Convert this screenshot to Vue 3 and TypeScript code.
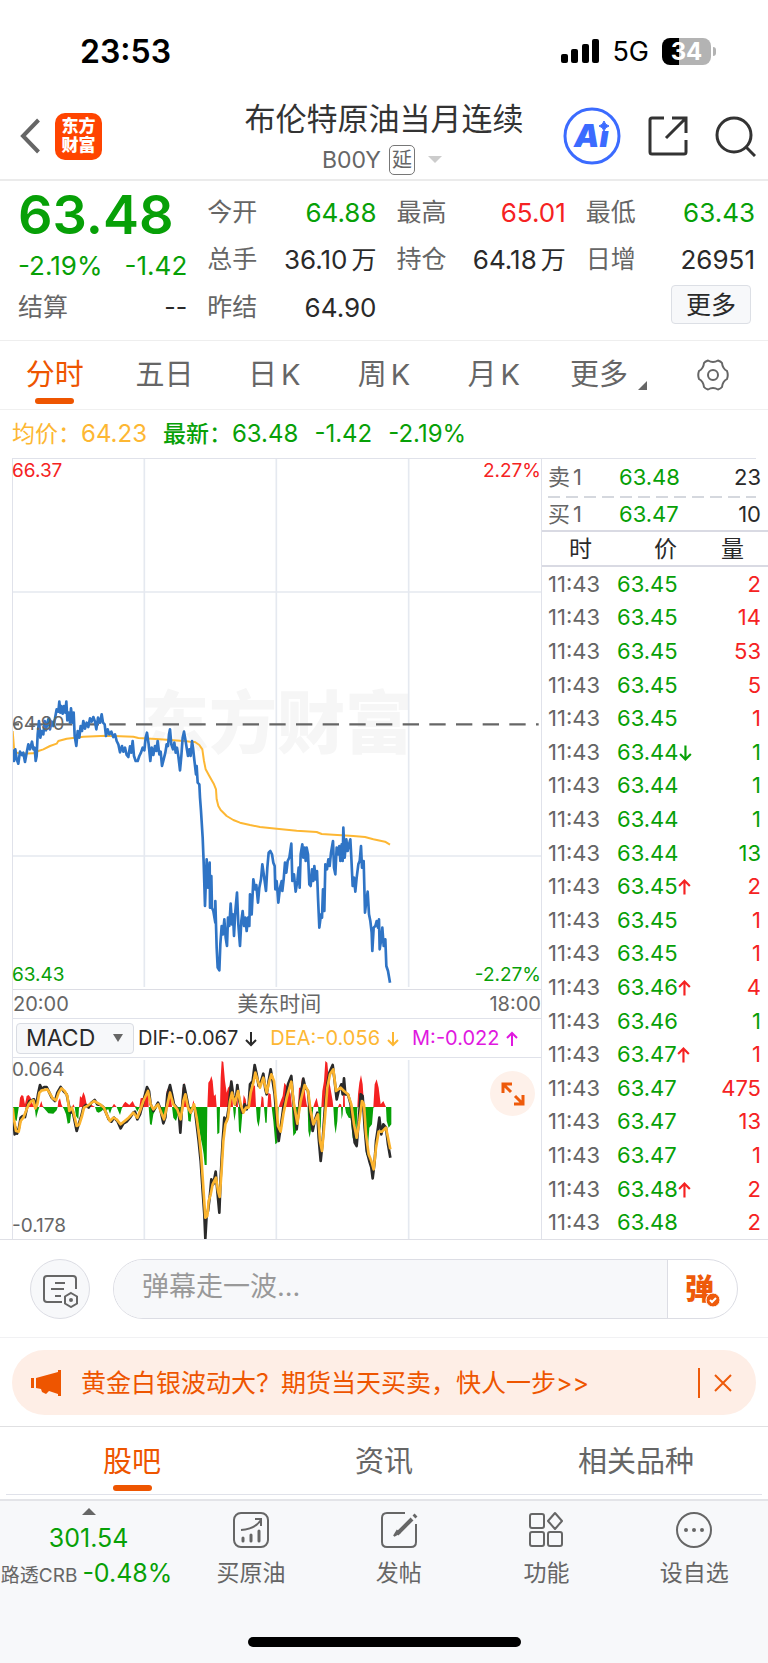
<script setup lang="ts">
type Point = [number, number]
type Trend = 'up' | 'down' | 'flat'

interface Trade {
  price: string
  arrow?: 'up' | 'down'
  volume: number
  side: Trend
}

const parse = (source: string, dx: number, dy: number): Point[] =>
  source.trim().split(/\s+/).map((pair) => {
    const [x, y] = pair.split(',').map(Number)
    return [x + dx, y + dy]
  })

const toPoints = (points: Point[]): string => points.map((p) => p.join(',')).join(' ')

const priceLine = toPoints([
  ...parse(`38,205 42,240 46,205 50,235 55,248 60,212 66,222 70,215 75,243 80,215 85,190 90,205 96,182 100,205 104,200 107,240
    110,225 113,160 117,120 121,170 125,150 130,160 134,120 138,148 142,125 146,112 150,145 155,122 160,135 165,112 170,85
    175,92 178,62 181,95 184,75 188,98 192,75 196,95 199,62 202,118 206,95 210,125 213,82 218,125 221,95 224,165 229,195 233,150
    238,170 242,135 246,150 250,120 255,143 260,125 265,138 270,112 275,122 280,108 285,122 289,145 294,110 300,125 305,100
    309,125 314,130 318,165 323,145 328,160 334,152 340,168 345,160 350,180 355,190 360,214 366,195 370,212 375,200 380,222
    385,228 390,196 394,215 398,180 402,225 407,240 413,240 418,225 423,215 428,200 433,208 437,170 441,155 446,190 451,240
    455,200 460,222 465,195 469,210 473,180 478,220 482,212 486,255 491,235 496,215 500,190 504,195 507,160 510,145 514,190
    519,205 523,185 527,215 531,200 535,225 540,268 544,225 548,170 552,152 556,175 560,200 564,225 568,205 572,225 576,180`, -36, 669),
  ...parse(`9,200 12,228 18,280 20,255 23,305 28,310 30,350 33,390 38,470 41,545 45,675 50,535 54,620 59,545 60,680 64,585 66,680 70,690
    76,725 76,660 80,800 83,860 88,868 91,790 95,735 99,760 103,715 107,770 111,795 114,710 118,735 122,668 126,730 129,700
    132,765 136,690 141,635 145,730 150,795 154,720 158,690 162,735 166,710 170,750 174,710 178,735 180,640 185,700 190,595
    195,625 199,612 204,665 208,620 213,595 217,550 222,585 228,630 232,560 236,515 241,510 246,520 250,545 254,555 256,625
    260,600 265,665 270,620 275,600 277,630 281,595 285,545 289,575 293,540 298,530 304,488 307,600 312,580 317,632 322,600
    326,560 329,620 332,520 337,490 340,530 344,500 347,540 350,500 354,520 358,610 362,615 366,565 370,600 373,555 377,595
    381,570 384,650 388,740 393,700 396,710 399,625 403,690 406,550 411,565 415,535 419,555 423,515 429,480 432,560 436,580
    440,500 444,520 448,495 451,540 455,490 458,540 460,440 464,530 469,475 473,510 477,490 481,475 484,530 488,615 492,590
    496,632 500,590 505,550 509,540 513,495 516,560 521,540 525,695 529,660 533,632 537,700 541,720 545,755 547,810 551,740
    556,735 560,720 564,740 567,715 569,805 573,780 577,740 581,795 586,775 589,855 594,870 600,905`, 534, 669),
])

const averageLine = toPoints([
  ...parse(`38,150 42,200 50,215 60,218 100,217 115,210 130,205 150,195 170,188 175,180 200,173 250,167 320,164 400,167
    415,171 480,175 520,178 560,181`, -36, 669),
  ...parse(`0,182 15,183 28,192 37,205 42,240 47,265 58,285 72,310 78,325 80,355 85,375 92,387 110,405 130,417 150,425 180,432 210,438
    260,443 320,449 380,453 395,459 430,461 490,465 525,468 550,475 585,482 600,491`, 534, 669),
])

const ZERO = 147
const histogram: Point[] = [
  ...parse(`38,438 40,475 50,480 56,440 57,438 60,410 65,402 70,405 75,430 80,405 86,402 92,410 98,430 104,438 108,472 114,450
    118,438 120,432 124,420 128,435 132,442 145,457 160,458 170,448 173,438 175,420 180,412 184,430 188,438 192,445 198,460
    203,488 210,485 213,460 216,445 220,430 224,438 228,465 235,475 237,440 240,405 245,410 250,393 255,405 260,430 268,430
    275,432 285,438 290,452 296,455 305,450 310,445 316,448 325,445 330,458 336,440 342,428 350,438 354,448 360,462 366,440
    370,430 376,422 388,432 398,420 405,435 412,452 418,440 422,412 430,410 435,390 440,380 445,400 446,438 450,490 455,492
    460,460 466,448 472,425 478,438 484,455 490,485 495,465 498,438 500,390 508,375 512,400 516,438 520,470 528,480 534,460
    540,478 544,440 548,380 553,365 558,410 562,438 565,480 572,482 576,442 580,418 585,435 588,445 595,490 600,520 607,555
    611,580 614,612 620,612 622,438 625,365 630,358 634,345 638,360 642,405 647,400 650,438 652,520 658,515 660,438 662,350
    665,300 670,303 675,360 680,395 684,380 689,375 693,355 697,400 699,438 703,480 707,455 708,438 711,372 714,438 717,510
    722,518 726,470 728,438 731,402 737,415 740,438 741,450 745,430 748,400 752,390 758,370 765,375 768,438 771,480 776,498
    780,470 782,438 785,405 790,410 792,438 796,485 800,485 802,438 805,395 812,400 815,438 820,480 826,550`, -36, -291),
  ...parse(`22,545 24,480 26,438 32,420 38,405 43,365 50,375 56,380 62,400 66,438 68,490 70,525 78,515 82,470 84,438 87,380 92,380
    96,350 101,355 106,405 110,430 113,438 115,510 119,530 124,500 128,460 130,438 134,425 140,410 144,430 146,470 152,510
    154,440 157,390 162,360 166,300 172,305 176,350 182,385 188,420 190,438 193,490 197,518 202,480 204,440 208,428 213,430
    215,475 218,460 219,438 220,370 223,370 225,438 228,455 236,470 242,472 248,530 258,555 262,440 264,400 268,365 273,342
    278,370 282,430 285,438 288,580 292,585 298,500 306,490 310,440 314,370 320,355 326,380 332,430 340,420 348,438 350,480
    356,500 364,490 364,438`, 774, -291),
]
const bars = {
  up: toPoints([...histogram.map(([x, y]): Point => [x, Math.min(y, ZERO)]), [histogram[0][0], ZERO]]),
  down: toPoints([...histogram.map(([x, y]): Point => [x, Math.max(y, ZERO)]), [histogram[0][0], ZERO]]),
}

const difLine = toPoints([
  ...parse(`40,470 44,520 47,500 51,518 56,505 62,470 68,465 75,468 82,435 88,420 95,418 102,415 108,440 114,400 120,372 126,385
    132,378 140,378 148,395 155,410 165,420 172,395 182,378 192,392 200,400 206,430 212,455 218,450 224,480 230,510 236,490
    244,465 250,440 258,432 266,440 274,425 284,417 292,430 302,432 310,438 318,455 326,475 334,482 342,470 352,480 362,502
    370,488 380,482 390,470 400,455 405,452 412,475 420,460 428,430 434,405 441,378 447,390 452,430 460,450 466,440 474,425
    480,440 490,487 496,470 502,400 510,372 516,400 522,430 530,440 536,450 541,515 546,440 552,372 558,400 566,440 572,455
    578,440 584,440 590,490 596,540 602,600 608,690 613,760 616,832 620,760 624,750 630,700 634,655 640,670 647,632 652,690
    658,755 662,650 668,540 673,470 680,480 686,440 690,400 694,362 700,405 706,430 712,372 718,420 726,455 734,430 740,445
    746,430 750,370 758,360 764,312 770,340 776,375 782,365 790,338 796,385 800,400 806,360`, -36, -291),
  ...parse(`2,325 8,360 14,400 20,480 26,540 32,500 40,440 46,420 54,370 64,345 68,400 74,460 80,505 86,450 94,390 100,353
    106,380 114,390 120,460 128,510 134,480 142,455 146,530 152,600 158,540 164,450 172,370 178,335 188,312 194,360 200,415
    206,390 214,370 218,400 222,352 226,400 234,400 242,430 248,490 254,545 260,555 266,480 272,400 278,405 284,500 290,570
    298,600 304,620 308,652 314,600 318,540 324,500 328,470 334,520 340,490 348,500 354,550 361,590`, 774, -291),
])

const deaLine = toPoints([
  ...parse(`38,440 42,475 48,510 56,512 62,480 70,470 78,450 86,430 94,420 100,418 106,442 112,430 118,395 126,388 142,385 150,398
    158,412 168,418 176,395 184,382 194,390 202,405 208,450 216,440 222,460 230,495 238,490 246,465 252,440 262,435 282,420
    300,430 312,440 322,465 330,480 340,470 350,475 362,490 374,480 386,470 400,455 412,470 420,450 430,420 444,390 452,430
    460,445 474,430 484,455 492,475 500,440 510,395 520,430 532,445 542,475 550,420 556,400 564,440 572,455 582,430 590,470
    598,530 604,590 610,680 616,770 622,765 626,720 632,700 638,670 648,650 654,690 659,708 664,640 670,540 676,490 684,470
    690,420 696,395 704,430 714,390 722,430 730,455 738,440 746,440 752,395 760,365 766,335 772,355 780,380 790,350 800,395
    808,360`, -36, -291),
  ...parse(`4,340 12,360 18,420 24,495 32,512 40,460 50,410 64,362 72,430 82,488 92,420 104,372 114,390 122,450 130,490 144,460
    150,540 156,570 164,480 172,380 180,340 190,325 198,390 212,380 222,390 234,400 244,430 252,490 260,530 268,480 276,420
    282,430 288,520 296,580 304,600 311,625 318,560 326,512 336,512 348,500 354,530 361,565`, 774, -291),
])

const quoteColumns = [
  [
    { label: '今开', value: '64.88', unit: '', trend: 'down' },
    { label: '总手', value: '36.10', unit: '万', trend: 'flat' },
    { label: '昨结', value: '64.90', unit: '', trend: 'flat' },
  ],
  [
    { label: '最高', value: '65.01', unit: '', trend: 'up' },
    { label: '持仓', value: '64.18', unit: '万', trend: 'flat' },
  ],
  [
    { label: '最低', value: '63.43', unit: '', trend: 'down' },
    { label: '日增', value: '26951', unit: '', trend: 'flat' },
  ],
]

const periods = ['分时', '五日', '日K', '周K', '月K']
const sections = ['股吧', '资讯', '相关品种']

const trades: Trade[] = [
  { price: '63.45', volume: 2, side: 'up' },
  { price: '63.45', volume: 14, side: 'up' },
  { price: '63.45', volume: 53, side: 'up' },
  { price: '63.45', volume: 5, side: 'up' },
  { price: '63.45', volume: 1, side: 'up' },
  { price: '63.44', arrow: 'down', volume: 1, side: 'down' },
  { price: '63.44', volume: 1, side: 'down' },
  { price: '63.44', volume: 1, side: 'down' },
  { price: '63.44', volume: 13, side: 'down' },
  { price: '63.45', arrow: 'up', volume: 2, side: 'up' },
  { price: '63.45', volume: 1, side: 'up' },
  { price: '63.45', volume: 1, side: 'up' },
  { price: '63.46', arrow: 'up', volume: 4, side: 'up' },
  { price: '63.46', volume: 1, side: 'down' },
  { price: '63.47', arrow: 'up', volume: 1, side: 'up' },
  { price: '63.47', volume: 475, side: 'up' },
  { price: '63.47', volume: 13, side: 'up' },
  { price: '63.47', volume: 1, side: 'up' },
  { price: '63.48', arrow: 'up', volume: 2, side: 'up' },
  { price: '63.48', volume: 2, side: 'up' },
]
</script>

<template>
  <div class="page">
    <div class="status">
      <span class="clock">23:53</span>
      <div class="signal">
        <svg width="40" height="26" viewBox="0 0 40 26" aria-hidden="true">
          <rect x="1" y="15" width="7" height="9" rx="2" />
          <rect x="11" y="10" width="7" height="14" rx="2" />
          <rect x="22" y="5" width="7" height="19" rx="2" />
          <rect x="32" y="0" width="7" height="24" rx="2" />
        </svg>
        <span class="network">5G</span>
        <div class="battery"><span>34</span></div>
        <i class="battery-cap"></i>
      </div>
    </div>

    <header class="header">
      <div class="header-left">
        <button class="bare" aria-label="返回">
          <svg width="20" height="36" viewBox="0 0 20 36" fill="none" stroke="#666" stroke-width="4">
            <path d="M18.500 2 L3 18 L18.500 34" />
          </svg>
        </button>
        <a class="logo" href="#"><span>东方</span><span>财富</span></a>
      </div>
      <div class="heading">
        <h1>布伦特原油当月连续</h1>
        <button class="bare symbol">
          <span>B00Y</span><span class="delay">延</span><i class="caret"></i>
        </button>
      </div>
      <div class="header-right">
        <button class="bare" aria-label="Ai">
          <svg width="58" height="58" viewBox="0 0 58 58">
            <circle cx="29" cy="29" r="27" fill="none" stroke="#3b6bff" stroke-width="3" />
            <text x="11" y="40" class="ai-text">Ai</text>
            <rect x="35" y="12" width="13" height="12" fill="#fff" />
            <path d="M41 14 Q42 18 46 19 Q42 20 41 24 Q40 20 36 19 Q40 18 41 14Z" fill="#3b6bff" stroke="#3b6bff" />
          </svg>
        </button>
        <button class="bare" aria-label="分享">
          <svg width="40" height="40" viewBox="0 0 40 40" fill="none" stroke="#333" stroke-width="3">
            <path d="M16 2 H4 Q2 2 2 4 V36 Q2 38 4 38 H36 Q38 38 38 36 V24" />
            <path d="M24 2 H38 V17 M38 2 L18 22" />
          </svg>
        </button>
        <button class="bare" aria-label="搜索">
          <svg width="41" height="41" viewBox="0 0 41 41" fill="none" stroke="#333" stroke-width="3">
            <circle cx="19" cy="19" r="17" />
            <path d="M31 31 L40 40" />
          </svg>
        </button>
      </div>
    </header>

    <section class="quote">
      <div class="summary">
        <strong>63.48</strong>
        <div class="change"><span>-2.19%</span><span>-1.42</span></div>
        <div class="settle"><span class="label">结算</span><span>--</span></div>
      </div>
      <div v-for="(column, c) in quoteColumns" :key="c">
        <div v-for="item in column" :key="item.label" class="quote-row">
          <span class="label">{{ item.label }}</span>
          <span class="value" :class="item.trend">{{ item.value }}<span v-if="item.unit" class="unit">{{ item.unit }}</span></span>
        </div>
        <div v-if="c === 2" class="quote-row more-row"><button class="more">更多</button></div>
      </div>
    </section>

    <nav class="periods">
      <button v-for="(name, i) in periods" :key="name" class="tab" :class="{ active: i === 0 }">{{ name[0] }}<span :class="{ latin: name[1] === 'K' }">{{ name[1] }}</span></button>
      <button class="tab">
        <span class="tab-more">更多<svg width="9" height="9" viewBox="0 0 9 9"><path d="M9 0 V9 H0Z" fill="#666" /></svg></span>
      </button>
      <button class="bare gear" aria-label="设置">
        <svg width="32" height="32" viewBox="0 0 32 32" fill="none" stroke="#666" stroke-width="2">
          <circle cx="16" cy="16" r="5" />
          <path d="M11 1.500 Q16 4.500 21 1.500 Q24 2.500 25 4 Q25.500 9.500 30 12 Q31.500 16 30 20 Q25.500 22.500 25 28 Q24 29.500 21 30.500 Q16 27.500 11 30.500 Q8 29.500 7 28 Q6.500 22.500 2 20 Q0.500 16 2 12 Q6.500 9.500 7 4 Q8 2.500 11 1.500Z" />
        </svg>
      </button>
    </nav>

    <div class="legend">
      <span class="amber"><span class="name">均价：</span>64.23</span>
      <span><span class="name"><b>最新</b>：</span>63.48</span>
      <span>-1.42</span>
      <span>-2.19%</span>
    </div>

    <section class="market">
      <div class="charts">
        <div class="price-chart">
          <span class="watermark">东方财富</span>
          <svg class="plot" viewBox="3 3 1584 1590" preserveAspectRatio="none" aria-hidden="true">
            <g class="grid">
              <path d="M397 0 V1587 M793 0 V1587 M1190 0 V1587 M0 402 H1587 M0 1194 H1587" />
            </g>
            <path d="M0 799 H1580" stroke="#666" stroke-width="7" stroke-dasharray="49 31" stroke-dashoffset="28" />
            <polyline :points="averageLine" stroke="#fdb733" />
            <polyline class="thick" :points="priceLine" stroke="#2f74c5" />
          </svg>
          <span class="mark top-left up">66.37</span>
          <span class="mark top-right up">2.27%</span>
          <span class="mark middle">64.90</span>
          <span class="mark bottom-left down">63.43</span>
          <span class="mark bottom-right down">-2.27%</span>
        </div>
        <div class="times"><span>20:00</span><span class="zone">美东时间</span><span>18:00</span></div>
        <div class="indicator">
          <button class="picker">MACD<i></i></button>
          <span>DIF:-0.067<svg class="arrow" viewBox="0 0 13 16"><path d="M6 1 V14 M1 9 L6 14 L11 9" /></svg></span>
          <span class="amber">DEA:-0.056<svg class="arrow" viewBox="0 0 13 16"><path d="M6 1 V14 M1 9 L6 14 L11 9" /></svg></span>
          <span class="magenta">M:-0.022<svg class="arrow" viewBox="0 0 13 16"><path d="M6 15 V2 M1 7 L6 2 L11 7" /></svg></span>
        </div>
        <div class="macd-chart">
          <svg class="plot" viewBox="3 0 1584 543" preserveAspectRatio="none" aria-hidden="true">
            <g class="grid"><path d="M397 6 V543 M793 6 V543 M1190 6 V543" /></g>
            <polygon :points="bars.up" fill="#f52222" />
            <polygon :points="bars.down" fill="#07a007" />
            <polyline class="thick" :points="difLine" stroke="#2a2a2a" />
            <polyline class="thick" :points="deaLine" stroke="#fbb42f" />
          </svg>
          <span class="mark top-left">0.064</span>
          <span class="mark bottom-left">-0.178</span>
          <button class="bare expand" aria-label="放大">
            <svg width="24" height="24" viewBox="0 0 24 24" fill="none" stroke="#ee5a0a" stroke-width="3">
              <path d="M2 11 V2 H11 M2 2 L10 10 M22 13 V22 H13 M22 22 L14 14" />
            </svg>
          </button>
        </div>
      </div>

      <div class="ticker">
        <div class="book">
          <span class="label">卖<span class="level">1</span></span><span class="down">63.48</span><span class="size">23</span>
        </div>
        <div class="dashes"></div>
        <div class="book bid">
          <span class="label">买<span class="level">1</span></span><span class="down">63.47</span><span class="size">10</span>
        </div>
        <table>
          <thead>
            <tr><th>时</th><th>价</th><th>量</th></tr>
          </thead>
          <tbody>
            <tr v-for="(trade, i) in trades" :key="i">
              <td class="label">11:43</td>
              <td class="down">
                {{ trade.price }}<svg v-if="trade.arrow" class="arrow" :class="trade.arrow" viewBox="0 0 13 16">
                  <path :d="trade.arrow === 'up' ? 'M6 15 V2 M1 7 L6 2 L11 7' : 'M6 1 V14 M1 9 L6 14 L11 9'" />
                </svg>
              </td>
              <td :class="trade.side">{{ trade.volume }}</td>
            </tr>
          </tbody>
        </table>
      </div>
    </section>

    <form class="danmaku" @submit.prevent>
      <button type="button" class="bare settings" aria-label="弹幕设置">
        <svg width="38" height="34" viewBox="0 0 38 34" fill="none" stroke="#666" stroke-width="2">
          <path d="M34 15 V5 Q34 2 31 2 H5 Q2 2 2 5 V25 Q2 28 5 28 H20 M13 9 H23 M9 15 H22 M13 22 H19" />
          <path d="M29 19 L35 22.500 V29.500 L29 33 L23 29.500 V22.500Z" />
          <circle cx="29" cy="26" r="1" fill="#666" />
        </svg>
      </button>
      <div class="pill">
        <input type="text" placeholder="弹幕走一波..." aria-label="弹幕" />
        <button type="button" class="bare toggle" aria-label="弹幕开关">
          <span>弹</span>
          <svg width="16" height="16" viewBox="0 0 16 16" fill="none">
            <circle cx="8" cy="8" r="7" fill="#ee5a0a" stroke="#fff" />
            <path d="M5 8 L7 10 L11 6" stroke="#fff" stroke-width="2" />
          </svg>
        </button>
      </div>
    </form>

    <div class="promo">
      <div class="banner">
        <svg width="30" height="26" viewBox="0 0 30 26" fill="#ee5500" aria-hidden="true">
          <path d="M0 8 H3 V18 H0Z M5 8 L27 2 V0 H30 V26 H27 V24 L18 21 L15 24 L11 22 L10 19 L5 18Z" />
        </svg>
        <a href="#">黄金白银波动大？期货当天买卖，快人一步&gt;&gt;</a>
        <button class="bare close" aria-label="关闭">
          <svg width="18" height="18" viewBox="0 0 18 18" fill="none" stroke="#ee5a0a" stroke-width="2"><path d="M1 1 L17 17 M17 1 L1 17" /></svg>
        </button>
      </div>
    </div>

    <nav class="sections">
      <button v-for="(name, i) in sections" :key="name" class="tab" :class="{ active: i === 0 }">{{ name }}</button>
    </nav>

    <footer class="dock">
      <div class="dock-row">
        <button class="bare index">
          <svg width="14" height="7" viewBox="0 0 14 7"><path d="M7 0 L14 7 H0Z" fill="#666" /></svg>
          <span class="index-value">301.54</span>
          <span class="index-line"><small>路透CRB</small>-0.48%</span>
        </button>
        <button class="bare action">
          <svg width="38" height="38" viewBox="0 0 38 38" fill="none" stroke="#666" stroke-width="2">
            <rect x="2" y="2" width="34" height="34" rx="7" />
            <path d="M9 19 Q23 18 29 9 M23 8 H29 V15" />
            <path d="M11 27 V30 M19 24 V30 M27 20 V30" stroke-width="3" stroke-linecap="round" />
          </svg>
          买原油
        </button>
        <button class="bare action">
          <svg width="38" height="38" viewBox="0 0 38 38" fill="none" stroke="#666" stroke-width="2">
            <path d="M25 2 H7 Q2 2 2 7 V31 Q2 36 7 36 H31 Q36 36 36 31 V13" />
            <path d="M32 8 L17 23" stroke-width="4" />
            <path d="M17 20 L19 22 L14 25Z" fill="#666" />
            <path d="M34 6 L36 4" stroke-width="4" />
          </svg>
          发帖
        </button>
        <button class="bare action">
          <svg width="38" height="38" viewBox="0 0 38 38" fill="none" stroke="#666" stroke-width="2">
            <rect x="3" y="3" width="14" height="14" rx="2" />
            <rect x="3" y="21" width="14" height="14" rx="2" />
            <rect x="21" y="21" width="14" height="14" rx="2" />
            <path d="M28 2 L35 10 L28 18 L21 10Z" stroke-linejoin="round" />
          </svg>
          功能
        </button>
        <button class="bare action">
          <svg width="38" height="38" viewBox="0 0 38 38" fill="none" stroke="#666" stroke-width="2">
            <circle cx="19" cy="19" r="17" />
            <path d="M11 19 h0 M19 19 h0 M27 19 h0" stroke-width="4" stroke-linecap="round" />
          </svg>
          设自选
        </button>
      </div>
      <div class="home"></div>
    </footer>
  </div>
</template>

<style>
body {
  margin: 0;
  background: #fff;
}
</style>

<style scoped>
.page {
  display: flex;
  flex-direction: column;
  min-height: 100vh;
  background: #fff;
  color: #2a2a2a;
  font-family: Inter, "Noto Sans CJK SC", sans-serif;
  font-size: 25px;
  font-weight: 400;
}
.page * {
  box-sizing: border-box;
}
button {
  font: inherit;
  color: inherit;
  cursor: pointer;
}
a {
  text-decoration: none;
}
svg {
  display: block;
  flex: none;
}
.bare {
  padding: 0;
  border: 0;
  background: none;
}
.label {
  color: #666;
}
.up {
  color: #f52222;
}
.down {
  color: #07a007;
}
.flat {
  color: #2a2a2a;
}
.amber {
  color: #fdb733;
}
.magenta {
  color: #e018e0;
}

.status {
  display: flex;
  justify-content: space-between;
  align-items: center;
  height: 95px;
  padding: 8px 52px 0 80px;
  color: #000;
}
.clock {
  font-size: 32px;
  font-weight: 600;
}
.signal {
  display: flex;
  align-items: center;
}
.network {
  margin: 0 13px 0 12px;
  font-size: 27px;
}
.battery {
  width: 49px;
  border-radius: 8px;
  background: linear-gradient(90deg, #000 35%, #b3b3b3 35%);
  color: #fff;
  font-size: 24px;
  font-weight: 700;
  line-height: 27px;
  text-align: center;
}
.battery-cap {
  width: 3px;
  height: 9px;
  margin-left: 2px;
  border-radius: 0 4px 4px 0;
  background: #b3b3b3;
}

.header {
  display: grid;
  grid-template-columns: 1fr auto 1fr;
  height: 86px;
  padding: 0 12px;
  border-bottom: 2px solid #ebebeb;
}
.header-left,
.header-right {
  display: flex;
  align-items: center;
  padding-bottom: 2px;
}
.header-left {
  gap: 15px;
  padding-left: 8px;
}
.header-right {
  justify-content: flex-end;
  gap: 27px;
}
.logo {
  display: flex;
  flex-direction: column;
  align-items: center;
  justify-content: center;
  width: 47px;
  height: 47px;
  border-radius: 10px;
  background: #ff4400;
  color: #fff;
  font-size: 17px;
  font-weight: 900;
  line-height: 19px;
}
.heading {
  display: flex;
  flex-direction: column;
  align-items: center;
}
h1 {
  margin: 0;
  padding-top: 1px;
  color: #333;
  font-size: 31px;
  font-weight: 400;
  line-height: 46px;
}
.symbol {
  display: flex;
  align-items: center;
  height: 35px;
  padding-right: 4px;
  color: #666;
  font-size: 23px;
}
.delay {
  width: 26px;
  margin: 0 13px 0 8px;
  border: 1px solid #777;
  border-radius: 5px;
  font-size: 20px;
  line-height: 28px;
}
.caret {
  border: 7px solid transparent;
  border-top-color: #ccc;
  border-bottom: 0;
}
.ai-text {
  fill: #3b6bff;
  font-size: 32px;
  font-style: italic;
  font-weight: 900;
}

.quote {
  display: grid;
  grid-template-columns: repeat(4, 1fr);
  gap: 20px;
  padding: 8px 13px 9px 18px;
  border-bottom: 1px solid #eeeeee;
}
.summary strong {
  display: block;
  color: #07a007;
  font-size: 54px;
  font-weight: 600;
  line-height: 52px;
}
.change,
.settle,
.quote-row {
  display: flex;
  justify-content: space-between;
}
.change {
  color: #07a007;
  font-size: 26px;
  line-height: 50px;
}
.settle {
  line-height: 32px;
}
.quote-row {
  line-height: 47px;
  white-space: nowrap;
}
.value {
  font-size: 26px;
}
.unit {
  margin-left: 4px;
  font-size: 25px;
}
.more-row {
  justify-content: flex-end;
  align-items: center;
  height: 43px;
  padding-right: 4px;
}
.more {
  width: 80px;
  height: 39px;
  padding: 0;
  border: 1px solid #dcdfe5;
  border-radius: 4px;
  background: #f7f8fa;
  line-height: 34px;
}

.tab {
  display: flex;
  flex-wrap: wrap;
  justify-content: center;
  padding: 16px 0 5px;
  border: 0;
  background: none;
  color: #666;
  font-size: 29px;
  line-height: 36px;
}
.tab::after {
  content: "";
  flex: none;
  width: 39px;
  height: 6px;
  margin: 5px 40px 0;
  border-radius: 3px;
}
.active {
  color: #ee5500;
}
.active::after {
  background: #ee5500;
}
.latin {
  margin-left: 4px;
}
.periods {
  display: grid;
  grid-template-columns: repeat(7, 1fr);
  border-bottom: 1px solid #f0f0f0;
}
.periods .tab::after {
  margin: 5px 35px 0;
}
.tab-more {
  display: flex;
  align-items: flex-end;
  gap: 10px;
  padding-left: 10px;
}
.tab-more svg {
  margin-bottom: 3px;
}
.gear {
  display: flex;
  align-items: center;
  justify-content: center;
}

.legend {
  display: flex;
  gap: 16px;
  padding-left: 12px;
  color: #07a007;
  font-size: 24px;
  line-height: 48px;
  white-space: nowrap;
}
.name {
  font-size: 23px;
}
.legend b {
  font-weight: 500;
}

.market {
  display: grid;
  grid-template-columns: 530fr 226fr;
  padding-left: 12px;
  border-bottom: 1px solid #dfe0e6;
}
.charts {
  border: solid #e0e2ea;
  border-width: 1px 1px 0;
}
.price-chart,
.macd-chart {
  position: relative;
}
.price-chart {
  height: 530px;
}
.macd-chart {
  height: 181px;
}
.plot {
  position: relative;
  width: 100%;
  height: 100%;
  fill: none;
}
.plot polyline {
  stroke-width: 6;
  stroke-linejoin: round;
}
.plot .thick {
  stroke-width: 8;
}
.grid {
  stroke: #e5e9f0;
  stroke-width: 5;
}
.watermark {
  position: absolute;
  top: 214px;
  left: 0;
  right: 0;
  color: #f6f6f6;
  font-size: 68px;
  font-weight: 900;
  line-height: 100px;
  text-align: center;
}
.mark {
  position: absolute;
  font-size: 19px;
  line-height: 24px;
}
.mark:not(.up):not(.down) {
  color: #666;
}
.top-left {
  top: 0;
  left: -1px;
}
.top-right {
  top: 0;
  right: 0;
}
.middle {
  top: 253px;
  left: -1px;
}
.bottom-left {
  bottom: 2px;
  left: -1px;
}
.bottom-right {
  right: 0;
  bottom: 2px;
}
.macd-chart .bottom-left {
  bottom: 1px;
}
.times {
  display: flex;
  justify-content: space-between;
  border-top: 1px solid #dcdde4;
  color: #666;
  font-size: 20px;
  line-height: 28px;
}
.zone {
  font-size: 21px;
}
.indicator {
  display: flex;
  align-items: center;
  gap: 12px;
  height: 40px;
  padding-left: 3px;
  border: solid #e0e2ea;
  border-width: 1px 0;
  font-size: 20px;
  white-space: nowrap;
}
.picker {
  display: flex;
  flex: none;
  align-items: center;
  justify-content: space-between;
  width: 118px;
  height: 31px;
  margin-right: -8px;
  padding: 0 10px 0 9px;
  border: 1px solid #d9dce3;
  border-radius: 4px;
  background: #f7f8fa;
  font-size: 23px;
}
.picker i {
  border: 5px solid transparent;
  border-top: 8px solid #666;
  border-bottom: 0;
}
.arrow {
  display: inline-block;
  width: 13px;
  height: 16px;
  fill: none;
  stroke: currentColor;
  stroke-width: 2;
}
.indicator .arrow {
  margin-left: 7px;
  vertical-align: -2px;
}
.expand {
  position: absolute;
  top: 13px;
  right: 6px;
  display: flex;
  align-items: center;
  justify-content: center;
  width: 45px;
  height: 45px;
  border-radius: 50%;
  background: #fef1ea;
}

.ticker {
  display: flex;
  flex-direction: column;
  font-size: 22px;
  background: linear-gradient(#e0e2ea, #e0e2ea) 0 0 / 214px 1px no-repeat;
}
.book {
  display: grid;
  grid-template-columns: 71px 1fr 50px;
  padding: 0 7px 0 6px;
  line-height: 38px;
}
.level {
  margin-left: 3px;
}
.size {
  text-align: right;
}
.dashes {
  height: 2px;
  margin: 0 12px 0 6px;
  background: repeating-linear-gradient(90deg, #d5d8de 0 12px, transparent 12px 18px);
}
.bid {
  line-height: 32px;
}
table {
  display: flex;
  flex: 1;
  flex-direction: column;
}
tr {
  display: grid;
  grid-template-columns: 69px 1fr 46px;
  align-items: center;
  padding: 0 7px 0 6px;
}
thead tr {
  height: 37px;
  border: solid #d9dae3;
  border-width: 2px 0;
}
th {
  padding: 2px 0 0;
  font-size: 23px;
  font-weight: 400;
  line-height: 31px;
}
th:nth-child(1) {
  padding-right: 4px;
}
th:nth-child(2) {
  padding-right: 1px;
}
th:nth-child(3) {
  padding-right: 11px;
}
tbody {
  display: grid;
  flex: 1;
  grid-auto-rows: 1fr;
}
td {
  padding: 0;
  line-height: 28px;
  white-space: nowrap;
}
td:last-child {
  text-align: right;
}
td .arrow {
  width: 14px;
  height: 18px;
  vertical-align: -2px;
}

.danmaku {
  display: flex;
  gap: 23px;
  padding: 19px 30px 18px;
  border-bottom: 1px solid #f1f1f3;
}
.settings {
  display: flex;
  align-items: center;
  justify-content: center;
  width: 60px;
  height: 60px;
  padding: 4px 0 0 2px;
  border: 1px solid #dcdde4;
  border-radius: 50%;
  background: #f7f8fa;
}
.pill {
  display: flex;
  flex: 1;
  overflow: hidden;
  height: 60px;
  border: 1px solid #dcdde4;
  border-radius: 30px;
}
.pill input {
  flex: 1;
  min-width: 0;
  padding: 0 0 6px 28px;
  border: 0;
  outline: 0;
  background: #f7f8fa;
  font: inherit;
  font-size: 27px;
}
.pill input::placeholder {
  color: #999;
  opacity: 1;
}
.toggle {
  display: flex;
  align-items: center;
  width: 70px;
  padding: 0 0 4px 17px;
  border-left: 1px solid #dcdde4;
  color: #ee5a0a;
  font-size: 29px;
  font-weight: 900;
}
.toggle svg {
  margin: 26px 0 0 -9px;
}

.promo {
  padding: 12px 12px 11px;
  border-bottom: 1px solid #e0e0e2;
}
.banner {
  display: flex;
  align-items: center;
  height: 65px;
  padding: 0 24px 0 19px;
  border-radius: 33px;
  background: #feeee6;
}
.banner a {
  flex: 1;
  padding: 0 0 4px 20px;
  color: #ee5500;
  white-space: nowrap;
}
.close {
  height: 30px;
  padding-left: 14px;
  border-left: 2px solid #ee5a0a;
}

.sections {
  display: grid;
  grid-template-columns: repeat(3, 1fr);
  margin: 0 6px 4px;
  border-bottom: 1px solid #e0e2ea;
}
.sections .tab {
  padding: 17px 0 3px;
}
.sections .tab::after {
  margin: 5px 100px 0;
}

.dock {
  display: flex;
  flex: 1;
  flex-direction: column;
  justify-content: space-between;
  align-items: center;
  border-top: 2px solid #e3e4e8;
  background: #f7f8fa;
}
.dock-row {
  display: grid;
  grid-template-columns: 30fr 25fr 25fr 25fr 25fr;
  width: 100%;
}
.index {
  display: flex;
  flex-direction: column;
  align-items: center;
  padding-top: 7px;
  color: #07a007;
  font-size: 25px;
  white-space: nowrap;
}
.index-value {
  padding: 6px 0 3px;
  line-height: 34px;
}
.index-line {
  padding-right: 4px;
  line-height: 30px;
}
.index-line small {
  margin-right: 5px;
  color: #666;
  font-size: 19px;
}
.action {
  display: flex;
  flex-direction: column;
  align-items: center;
  gap: 7px;
  padding-top: 10px;
  color: #666;
  font-size: 23px;
  line-height: 34px;
}
.home {
  width: 273px;
  height: 10px;
  margin: 16px 0;
  border-radius: 5px;
  background: #000;
}
</style>
